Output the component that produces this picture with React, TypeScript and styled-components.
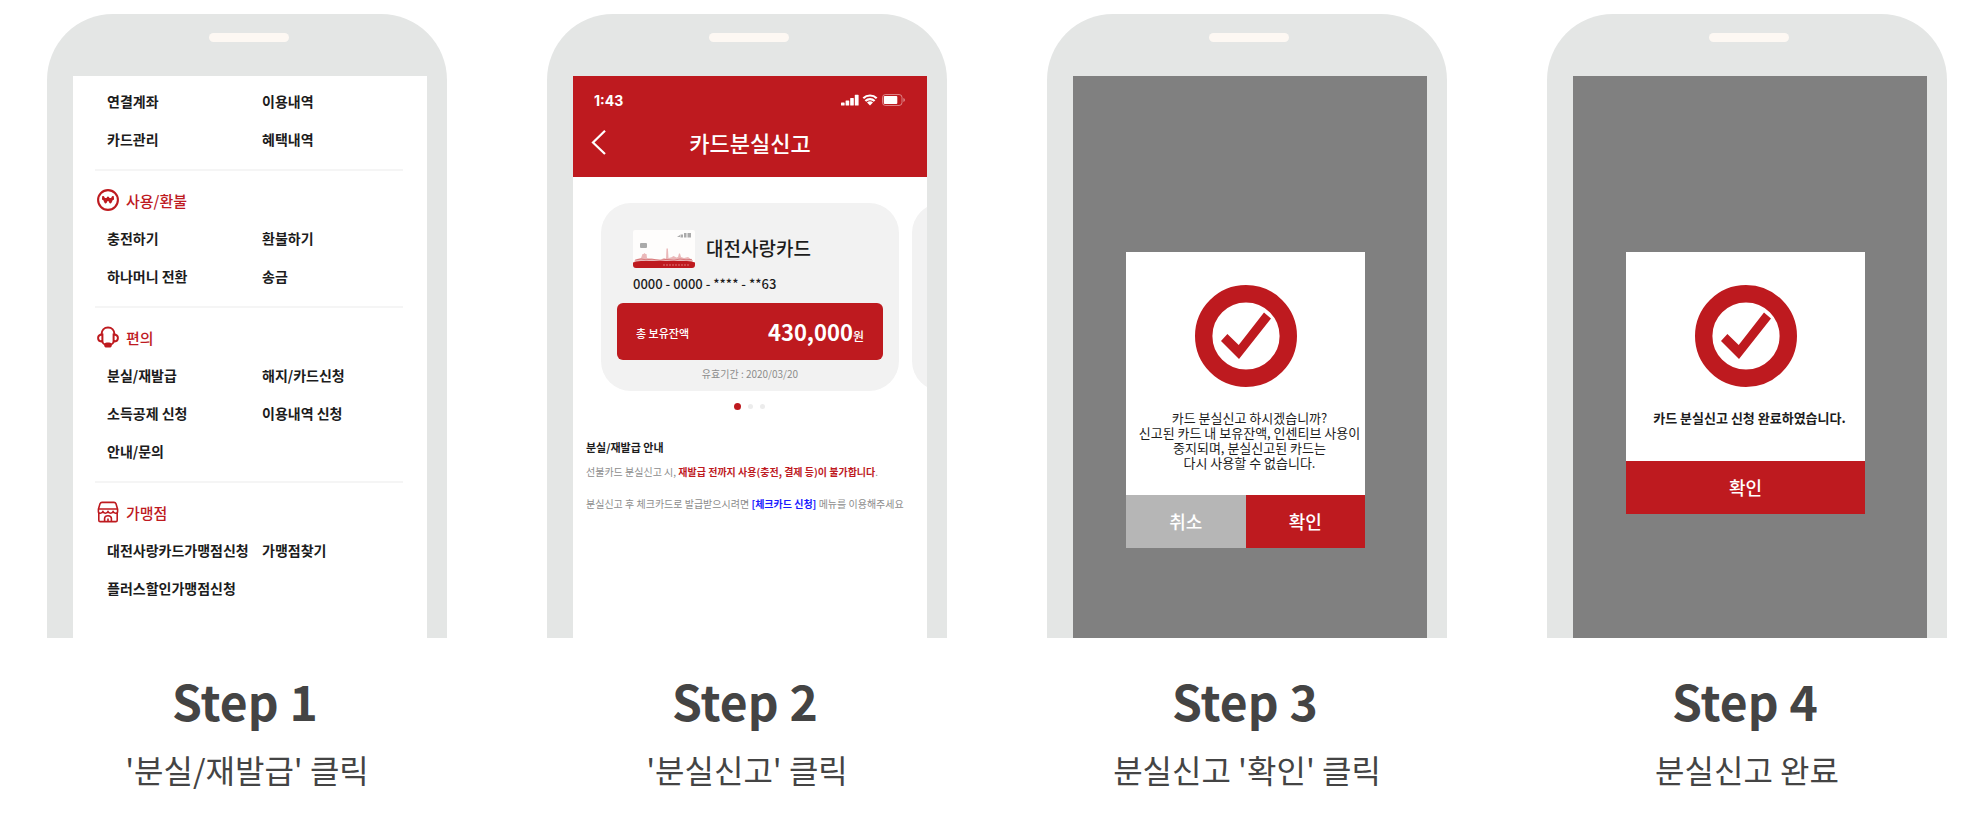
import React from "react";
import styled, { createGlobalStyle } from "styled-components";

const RED = "#be1a1f";

const GlobalStyle = createGlobalStyle`
  *, *::before, *::after { box-sizing: border-box; }
  body {
    margin: 0;
    background: #fff;
    color: #1c1c1c;
    font-family: "Noto Sans CJK KR", "Noto Sans", sans-serif;
  }
  h2, h3, p, ul { margin: 0; padding: 0; }
  ul { list-style: none; }
  a { color: inherit; text-decoration: none; }
  button { border: 0; padding: 0; background: none; color: inherit; font: inherit; cursor: pointer; }
`;

const Steps = styled.main`
  display: grid;
  grid-template-columns: repeat(4, minmax(0, 1fr));
  column-gap: 100px;
  padding: 14px 27px 36px 47px;
`;

const Step = styled.section`
  display: flex;
  flex-direction: column;
  text-align: center;
`;

const StepTitle = styled.h2`
  margin-top: 32px;
  padding-right: 4px;
  color: #444;
  font-size: 48px;
  font-weight: 700;
  line-height: 60px;
`;

const StepCaption = styled.p`
  margin-top: 19px;
  color: #444;
  font-size: 32px;
  line-height: 40px;
`;

const Phone = styled.div`
  display: flex;
  flex-direction: column;
  height: 624px;
  padding: 19px 20px 0 26px;
  border-radius: 66px 66px 0 0;
  background: #e4e6e5;
`;

const Speaker = styled.div`
  flex: none;
  align-self: center;
  width: 80px;
  height: 9px;
  margin: 0 2px 34px 0;
  border-radius: 5px;
  background: #fdf8f3;
`;

const Screen = styled.div<{ $dimmed?: boolean }>`
  flex: 1;
  min-height: 0;
  overflow: hidden;
  background: ${(p) => (p.$dimmed ? "#808080" : "#fff")};
  text-align: left;
`;

/* Menu screen */

const Menu = styled.nav`
  padding: 6px 24px 0 22px;
`;

const MenuSection = styled.section`
  & + & {
    margin-top: 11px;
    padding-top: 10px;
    border-top: 2px solid #f5f5f5;
  }
`;

const MenuHeading = styled.h3`
  display: flex;
  align-items: center;
  gap: 7px;
  height: 38px;
  padding-left: 2px;
  color: ${RED};
  font-size: 15px;
  font-weight: 500;
`;

const MenuList = styled.ul`
  display: grid;
  grid-template-columns: 11fr 10fr;
  grid-auto-rows: 38px;
  align-items: center;
  padding-left: 12px;
  font-size: 14px;
  font-weight: 700;
  white-space: nowrap;
`;

/* Lost card screen */

const AppHeader = styled.header`
  height: 101px;
  padding: 14px 20px 0 18px;
  background: ${RED};
  color: #fff;
`;

const StatusBar = styled.div`
  display: flex;
  align-items: center;
  justify-content: space-between;
  height: 20px;
  padding-left: 3px;
  font-family: Inter, sans-serif;
  font-size: 14px;
  font-weight: 700;
`;

const TitleBar = styled.div`
  display: grid;
  grid-template-columns: 20px 1fr 18px;
  align-items: center;
  height: 32px;
  margin-top: 16px;
`;

const BackButton = styled.button`
  display: flex;
`;

const ScreenTitle = styled.h3`
  text-align: center;
  font-size: 22px;
  font-weight: 500;
  line-height: 32px;
`;

const Carousel = styled.div`
  display: flex;
  gap: 13px;
  padding: 26px 0 0 28px;
  overflow: hidden;
`;

const CardPanel = styled.article`
  flex: none;
  width: 298px;
  height: 188px;
  padding: 27px 16px 0;
  border-radius: 30px;
  background: #f2f2f2;
`;

const CardTop = styled.div`
  display: flex;
  align-items: center;
  gap: 11px;
  height: 38px;
  padding-left: 16px;
`;

const CardName = styled.span`
  font-size: 19px;
  font-weight: 500;
  line-height: 26px;
  padding-bottom: 2px;
`;

const CardNumber = styled.p`
  margin-top: 6px;
  padding-left: 16px;
  font-size: 13px;
  font-weight: 500;
  line-height: 20px;
`;

const Balance = styled.div`
  display: flex;
  align-items: center;
  justify-content: space-between;
  height: 57px;
  margin-top: 9px;
  padding: 0 19px 2px;
  border-radius: 6px;
  background: ${RED};
  color: #fff;
  font-size: 12px;
  font-weight: 500;
`;

const BalanceLabel = styled.span`
  padding-top: 5px;
  font-size: 11px;
`;

const Amount = styled.strong`
  font-size: 22px;
  font-weight: 700;
`;

const Validity = styled.p`
  margin-top: 4px;
  color: #8c8c8c;
  text-align: center;
  font-size: 10px;
  line-height: 20px;
`;

const Dots = styled.div`
  display: flex;
  align-items: center;
  justify-content: center;
  gap: 7px;
  height: 7px;
  margin-top: 12px;
  padding-right: 2px;
`;

const Dot = styled.span<{ $active?: boolean }>`
  width: ${(p) => (p.$active ? 7 : 5)}px;
  height: ${(p) => (p.$active ? 7 : 5)}px;
  border-radius: 50%;
  background: ${(p) => (p.$active ? RED : "#ececec")};
`;

const Notice = styled.section`
  padding: 28px 0 0 13px;
  color: #8c8c8c;
  font-size: 10px;
  line-height: 16px;
  white-space: nowrap;
`;

const NoticeTitle = styled.h3`
  color: #1c1c1c;
  font-size: 11px;
  font-weight: 700;
  line-height: 18px;
`;

const NoticeText = styled.p`
  margin-top: 8px;
  & + & { margin-top: 16px; }
`;

const Warning = styled.strong`
  color: ${RED};
`;

const NoticeLink = styled.a`
  color: #1a1aff;
  font-weight: 700;
`;

/* Dialog screens */

const Backdrop = styled.div`
  padding: 176px 62px 0 53px;
`;

const Dialog = styled.div`
  background: #fff;
`;

const DialogBody = styled.div`
  display: flex;
  flex-direction: column;
  align-items: center;
  padding-top: 33px;
`;

const DialogText = styled.p<{ $strong?: boolean }>`
  padding: 23px 0 ${(p) => (p.$strong ? 36 : 25)}px 8px;
  text-align: center;
  white-space: nowrap;
  font-size: 13px;
  font-weight: ${(p) => (p.$strong ? 700 : 400)};
  line-height: 15px;
`;

const DialogActions = styled.div`
  display: flex;
`;

const DialogButton = styled.button<{ $muted?: boolean }>`
  flex: 1;
  height: 53px;
  padding-bottom: 1px;
  background: ${(p) => (p.$muted ? "#b6b6b6" : RED)};
  color: #fff;
  font-size: 18px;
  font-weight: 500;
`;

const WonIcon = () => (
  <svg width="22" height="22" viewBox="0 0 22 22" fill="none" stroke={RED} aria-hidden="true">
    <circle cx="11" cy="11" r="9.9" strokeWidth="2.100" />
    <path d="M6.200 8.200l2.400 5L11 8.800l2.400 4.400 2.400-5" strokeWidth="2.400" strokeLinejoin="round" strokeLinecap="round" />
    <path d="M5 9.900h12" strokeWidth="1.800" />
  </svg>
);

const HeadsetIcon = () => (
  <svg width="22" height="22" viewBox="0 0 22 22" fill="none" stroke={RED} strokeWidth="2" aria-hidden="true">
    <path d="M4.600 9V8.200C4.600 4.200 7.200 1.500 11 1.500s6.400 2.700 6.400 6.700V9" />
    <path d="M5.400 8.600v7C2.800 15.600 1.100 14.200 1.100 12.100s1.700-3.500 4.300-3.500zM16.600 8.600v7c2.600 0 4.300-1.400 4.300-3.500s-1.700-3.500-4.300-3.500z" />
    <path d="M4.800 15.200c.8 1.900 2 3.100 3.600 3.700M17.200 15.200c-.8 1.900-2 3.100-3.600 3.700" strokeWidth="1.700" />
    <rect x="8.200" y="17.400" width="5.600" height="3.200" rx="1.600" fill={RED} />
  </svg>
);

const StoreIcon = () => (
  <svg width="22" height="22" viewBox="0 0 22 22" fill="none" stroke={RED} strokeWidth="1.600" strokeLinejoin="round" aria-hidden="true">
    <path d="M5 1.400h12c1 0 1.600.4 2 1.400l1.600 5.400v2.200c0 1.100-.8 1.800-2 1.800s-2.300-.7-2.500-1.800c-.2 1.100-1.200 1.800-2.500 1.800S11.200 11.500 11 10.400c-.2 1.100-1.300 1.800-2.600 1.800s-2.300-.7-2.500-1.800c-.2 1.100-1.300 1.800-2.500 1.800s-2-.7-2-1.800V8.200L3 2.800c.4-1 1-1.400 2-1.400z" />
    <path d="M1.600 8h18.800M1.800 12v7.200c0 .9.500 1.400 1.400 1.400h15.600c.9 0 1.400-.5 1.400-1.400V12M7.600 20.600v-3c0-1.800 1.300-2.900 3.400-2.900s3.400 1.100 3.400 2.900v3M11 17.400v3" />
  </svg>
);

const StatusIcons = () => (
  <svg width="66" height="14" viewBox="0 0 66 14" fill="#fff" aria-hidden="true">
    <rect x="0" y="9.500" width="3.600" height="3" rx=".6" />
    <rect x="4.600" y="7.500" width="3.600" height="5" rx=".6" />
    <rect x="9.200" y="5" width="3.600" height="7.500" rx=".6" />
    <rect x="13.800" y="1.800" width="3.800" height="10.700" rx=".6" />
    <path d="M29 12.500l-3-3.100a4.200 4.200 0 0 1 6 0z" />
    <path d="M22.300 5.200a9.600 9.600 0 0 1 13.400 0M24.400 8a6.600 6.600 0 0 1 9.200 0" fill="none" stroke="#fff" strokeWidth="2.200" />
    <rect x="41.500" y="1.500" width="19.500" height="11" rx="3" fill="none" stroke="#fff" strokeOpacity=".45" />
    <rect x="42.800" y="3" width="13.500" height="8" rx="1" />
    <path d="M62.500 5v4a2.200 2.200 0 0 0 0-4z" fillOpacity=".6" />
  </svg>
);

const BackIcon = () => (
  <svg width="16" height="26" viewBox="0 0 16 26" fill="none" stroke="#fff" strokeWidth="2.200" aria-hidden="true">
    <path d="M14 1.800L2 13.500l12 11.500" />
  </svg>
);

const CardThumbnail = () => (
  <svg width="62" height="38" viewBox="0 0 62 38" aria-hidden="true">
    <rect width="62" height="37" rx="2" fill="#fefdfc" />
    <path d="M44 7l3-2v2zM47.500 4.500h2.500v3h-2.500zM51 3h2.500v4.500H51zM54.500 3h3.500v4.500h-3.500z" fill="#aaa" />
    <rect x="7" y="13" width="7" height="5" rx="1" fill="#aaa" />
    <path d="M1 31l3-2 4-1 1.500-4h1l1-1 1 1h1l.5 4 4 .5 5 .8 5 .2 3-1.500 2 .8.500-10.300h1.400L35.500 28l3-.8 2-1.200 3 1.500 1.500-.5 1-3.500h1l1 3.500 3 1 4-1 5 3.500-1 2H2z" fill={RED} fillOpacity=".3" />
    <path d="M2 30l6-1 5 .8 6-.6 8 1.200 6-1 8 .8 6-1.200 6 .8 6-.4" fill="none" stroke={RED} strokeOpacity=".5" strokeWidth=".8" />
    <path d="M0 32.500q3-1.500 8-1.500h46q5 0 8 1.500v2.500q0 3-3 3H3q-3 0-3-3z" fill={RED} />
    <path d="M30 35h27" stroke="#e58f91" strokeWidth=".8" strokeDasharray="2 1" />
  </svg>
);

const CheckMark = () => (
  <svg width="102" height="102" viewBox="0 0 102 102" fill="none" aria-hidden="true">
    <circle cx="51" cy="51" r="42.300" stroke={RED} strokeWidth="17.400" />
    <path d="M26 56l6.400-7L43.700 60 69 27.600l7 5.900L44 74z" fill={RED} />
  </svg>
);

type MenuGroup = { title?: string; icon?: React.ReactNode; items: string[] };

const menuGroups: MenuGroup[] = [
  { items: ["연결계좌", "이용내역", "카드관리", "혜택내역"] },
  { title: "사용/환불", icon: <WonIcon />, items: ["충전하기", "환불하기", "하나머니 전환", "송금"] },
  {
    title: "편의",
    icon: <HeadsetIcon />,
    items: ["분실/재발급", "해지/카드신청", "소득공제 신청", "이용내역 신청", "안내/문의"],
  },
  { title: "가맹점", icon: <StoreIcon />, items: ["대전사랑카드가맹점신청", "가맹점찾기", "플러스할인가맹점신청"] },
];

const MenuScreen = () => (
  <Screen>
    <Menu>
      {menuGroups.map((group, i) => (
        <MenuSection key={i}>
          {group.title && (
            <MenuHeading>
              {group.icon}
              {group.title}
            </MenuHeading>
          )}
          <MenuList>
            {group.items.map((item) => (
              <li key={item}>
                <a href="#">{item}</a>
              </li>
            ))}
          </MenuList>
        </MenuSection>
      ))}
    </Menu>
  </Screen>
);

const LostCardScreen = () => (
  <Screen>
    <AppHeader>
      <StatusBar>
        <span>1:43</span>
        <StatusIcons />
      </StatusBar>
      <TitleBar>
        <BackButton type="button" aria-label="뒤로">
          <BackIcon />
        </BackButton>
        <ScreenTitle>카드분실신고</ScreenTitle>
      </TitleBar>
    </AppHeader>
    <Carousel>
      <CardPanel>
        <CardTop>
          <CardThumbnail />
          <CardName>대전사랑카드</CardName>
        </CardTop>
        <CardNumber>0000 - 0000 - **** - **63</CardNumber>
        <Balance>
          <BalanceLabel>총 보유잔액</BalanceLabel>
          <span>
            <Amount>430,000</Amount>원
          </span>
        </Balance>
        <Validity>유효기간 : 2020/03/20</Validity>
      </CardPanel>
      <CardPanel />
    </Carousel>
    <Dots>
      <Dot $active />
      <Dot />
      <Dot />
    </Dots>
    <Notice>
      <NoticeTitle>분실/재발급 안내</NoticeTitle>
      <NoticeText>
        선불카드 분실신고 시, <Warning>재발급 전까지 사용(충전, 결제 등)이 불가합니다</Warning>.
      </NoticeText>
      <NoticeText>
        분실신고 후 체크카드로 발급받으시려면 <NoticeLink href="#">[체크카드 신청]</NoticeLink> 메뉴를 이용해주세요
      </NoticeText>
    </Notice>
  </Screen>
);

const ConfirmScreen = () => (
  <Screen $dimmed>
    <Backdrop>
      <Dialog role="dialog" aria-label="카드 분실신고">
        <DialogBody>
          <CheckMark />
          <DialogText>
            카드 분실신고 하시겠습니까?
            <br />
            신고된 카드 내 보유잔액, 인센티브 사용이
            <br />
            중지되며, 분실신고된 카드는
            <br />
            다시 사용할 수 없습니다.
          </DialogText>
        </DialogBody>
        <DialogActions>
          <DialogButton type="button" $muted>
            취소
          </DialogButton>
          <DialogButton type="button">확인</DialogButton>
        </DialogActions>
      </Dialog>
    </Backdrop>
  </Screen>
);

const DoneScreen = () => (
  <Screen $dimmed>
    <Backdrop>
      <Dialog role="dialog" aria-label="분실신고 완료">
        <DialogBody>
          <CheckMark />
          <DialogText $strong>카드 분실신고 신청 완료하였습니다.</DialogText>
        </DialogBody>
        <DialogActions>
          <DialogButton type="button">확인</DialogButton>
        </DialogActions>
      </Dialog>
    </Backdrop>
  </Screen>
);

const steps = [
  { title: "Step 1", caption: "'분실/재발급' 클릭", screen: <MenuScreen /> },
  { title: "Step 2", caption: "'분실신고' 클릭", screen: <LostCardScreen /> },
  { title: "Step 3", caption: "분실신고 '확인' 클릭", screen: <ConfirmScreen /> },
  { title: "Step 4", caption: "분실신고 완료", screen: <DoneScreen /> },
];

export default function App() {
  return (
    <>
      <GlobalStyle />
      <Steps>
        {steps.map((step) => (
          <Step key={step.title}>
            <Phone>
              <Speaker />
              {step.screen}
            </Phone>
            <StepTitle>{step.title}</StepTitle>
            <StepCaption>{step.caption}</StepCaption>
          </Step>
        ))}
      </Steps>
    </>
  );
}
